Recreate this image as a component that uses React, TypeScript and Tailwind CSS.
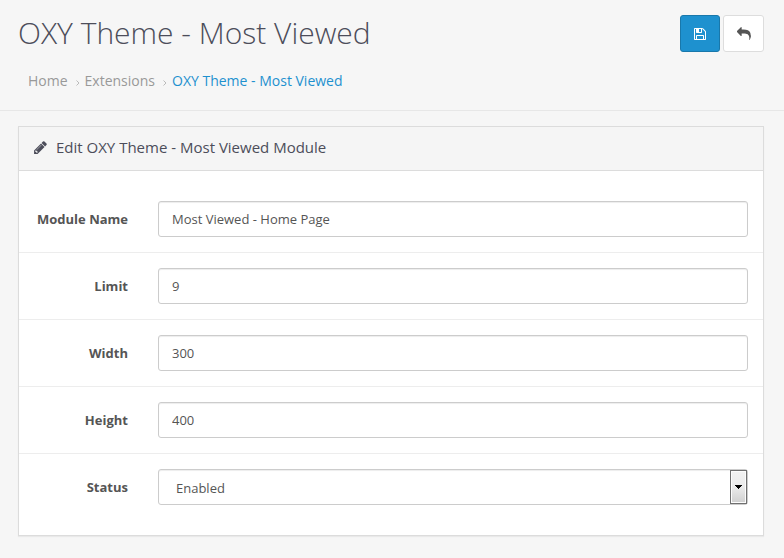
import React from "react";

function Icon({ path, className }: { path: string; className: string }) {
  return (
    <svg viewBox="0 0 1792 1792" fill="currentColor" className={className} aria-hidden="true">
      <path d={path} />
    </svg>
  );
}

const SAVE =
  "M512 1536h768v-384h-768v384zm896 0h128v-896q0-14-10-38.5t-20-34.5l-281-281q-10-10-34-20t-39-10v416q0 40-28 68t-68 28h-576q-40 0-68-28t-28-68v-416h-128v1280h128v-416q0-40 28-68t68-28h832q40 0 68 28t28 68v416zm-384-928v-320q0-13-9.5-22.5t-22.5-9.5h-192q-13 0-22.5 9.5t-9.5 22.5v320q0 13 9.5 22.5t22.5 9.5h192q13 0 22.5-9.5t9.5-22.5zm640 32v928q0 40-28 68t-68 28h-1344q-40 0-68-28t-28-68v-1344q0-40 28-68t68-28h928q40 0 88 20t76 48l280 280q28 28 48 76t20 88z";
const REPLY =
  "M1792 1120q0 166-127 451-3 7-10.5 24t-13.5 30-13 22q-12 17-28 17-15 0-23.5-10t-8.5-25q0-9 2.5-26.5t2.5-23.5q5-68 5-123 0-112-19.5-200.5t-54-153.5-89-112-116-80.5-142.5-46-158.500-20.500-177.500-6h-224v256q0 26-19 45t-45 19-45-19l-512-512q-19-19-19-45t19-45l512-512q19-19 45-19t45 19 19 45v256h224q713 0 875 403 53 134 53 333z";
const PENCIL =
  "M491 1536l91-91-235-235-91 91v107h128v128h107zm523-928q0-22-22-22-10 0-17 7l-542 542q-7 7-7 17 0 22 22 22 10 0 17-7l542-542q7-7 7-17zm-54-192l416 416-832 832h-416v-416l832-832zm683 96q0 53-37 90l-166 166-416-416 166-165q36-38 90-38 53 0 91 38l235 234q37 39 37 91z";

const fields = [
  { label: "Module Name", value: "Most Viewed - Home Page" },
  { label: "Limit", value: "9" },
  { label: "Width", value: "300" },
  { label: "Height", value: "400" },
];

function Separator() {
  return (
    <svg viewBox="0 0 4 6" className="mt-[9px] mr-[5px] ml-2 h-1.5 w-1" fill="none" stroke="#bbb">
      <path d="M.5.5 3 3 .5 5.500" />
    </svg>
  );
}

function Row({ label, children }: { label: string; children: React.ReactNode }) {
  return (
    <div className="flex h-[67px] items-center border-t border-[#ededed] pr-[15px] first:border-t-0 first:h-[66px]">
      <label className="w-[109px] shrink-0 pt-0.5 text-right font-bold text-[#555]">{label}</label>
      <div className="ml-[30px] h-9 flex-1">{children}</div>
    </div>
  );
}

export default function App() {
  return (
    <div className="h-[558px] w-[784px] overflow-hidden bg-[#f6f6f6] font-['Open_Sans','Noto_Sans',sans-serif] text-[13px] text-[#555]">
      <header className="flex h-[111px] justify-between border-b border-[#e7e7e7] pl-[18px] pr-5">
        <div>
          <h1 className="mt-[13px] text-[30px] leading-10 font-light text-[#4c4d5a]">OXY Theme - Most Viewed</h1>
          <nav className="mt-[18px] ml-[10px] flex text-[14px] leading-5 text-[#999]">
            <span>Home</span>
            <Separator />
            <span>Extensions</span>
            <Separator />
            <span className="text-[#1e91cf]">OXY Theme - Most Viewed</span>
          </nav>
        </div>
        <div className="mt-[15px] flex gap-[3px]">
          <button className="flex h-[37px] w-10 items-center justify-center rounded-[3px] border border-[#1978ab] bg-[#1e91cf] text-white">
            <Icon path={SAVE} className="size-[14px]" />
          </button>
          <button className="flex h-[37px] w-[41px] items-center justify-center rounded-[3px] border border-[#ddd] bg-white text-[#555]">
            <Icon path={REPLY} className="size-[14px]" />
          </button>
        </div>
      </header>
      <section className="mt-[15px] mr-5 ml-[18px] h-[410px] border border-[#dcdcdc] bg-white shadow-[0_1px_1px_rgba(0,0,0,0.05)]">
        <div className="flex h-11 items-center border-b border-[#dcdcdc] bg-[#f5f5f5] pb-[3px] pl-[14px] text-[15px] text-[#4c4d5a]">
          <Icon path={PENCIL} className="mt-px mr-2 size-[15px]" />
          <h3 className="leading-5">Edit OXY Theme - Most Viewed Module</h3>
        </div>
        <form className="pt-[15px]">
          {fields.map((f) => (
            <Row key={f.label} label={f.label}>
              <input
                defaultValue={f.value}
                className="block h-9 w-full rounded-[3px] border border-[#ccc] bg-white px-[13px] shadow-[inset_0_1px_1px_rgba(0,0,0,0.075)] outline-none"
              />
            </Row>
          ))}
          <Row label="Status">
            <div className="flex h-9 justify-between rounded-[3px] border border-[#ccc] bg-white shadow-[inset_0_1px_1px_rgba(0,0,0,0.075)]">
              <span className="pl-[17px] leading-9">Enabled</span>
              <span className="flex h-[34px] w-[17px] items-center justify-center border border-[#707070] bg-linear-to-b from-[#f2f2f2] from-0% via-[#ebebeb] via-50% to-[#cfcfcf] shadow-[inset_0_0_0_1px_#fcfcfc]">
                <svg viewBox="0 0 7 4" className="h-1 w-[7px]" shapeRendering="crispEdges">
                  <path d="M0 0h7v1H6v1H5v1H4v1H3V3H2V2H1V1H0z" fill="#000" />
                </svg>
              </span>
            </div>
          </Row>
        </form>
      </section>
    </div>
  );
}
